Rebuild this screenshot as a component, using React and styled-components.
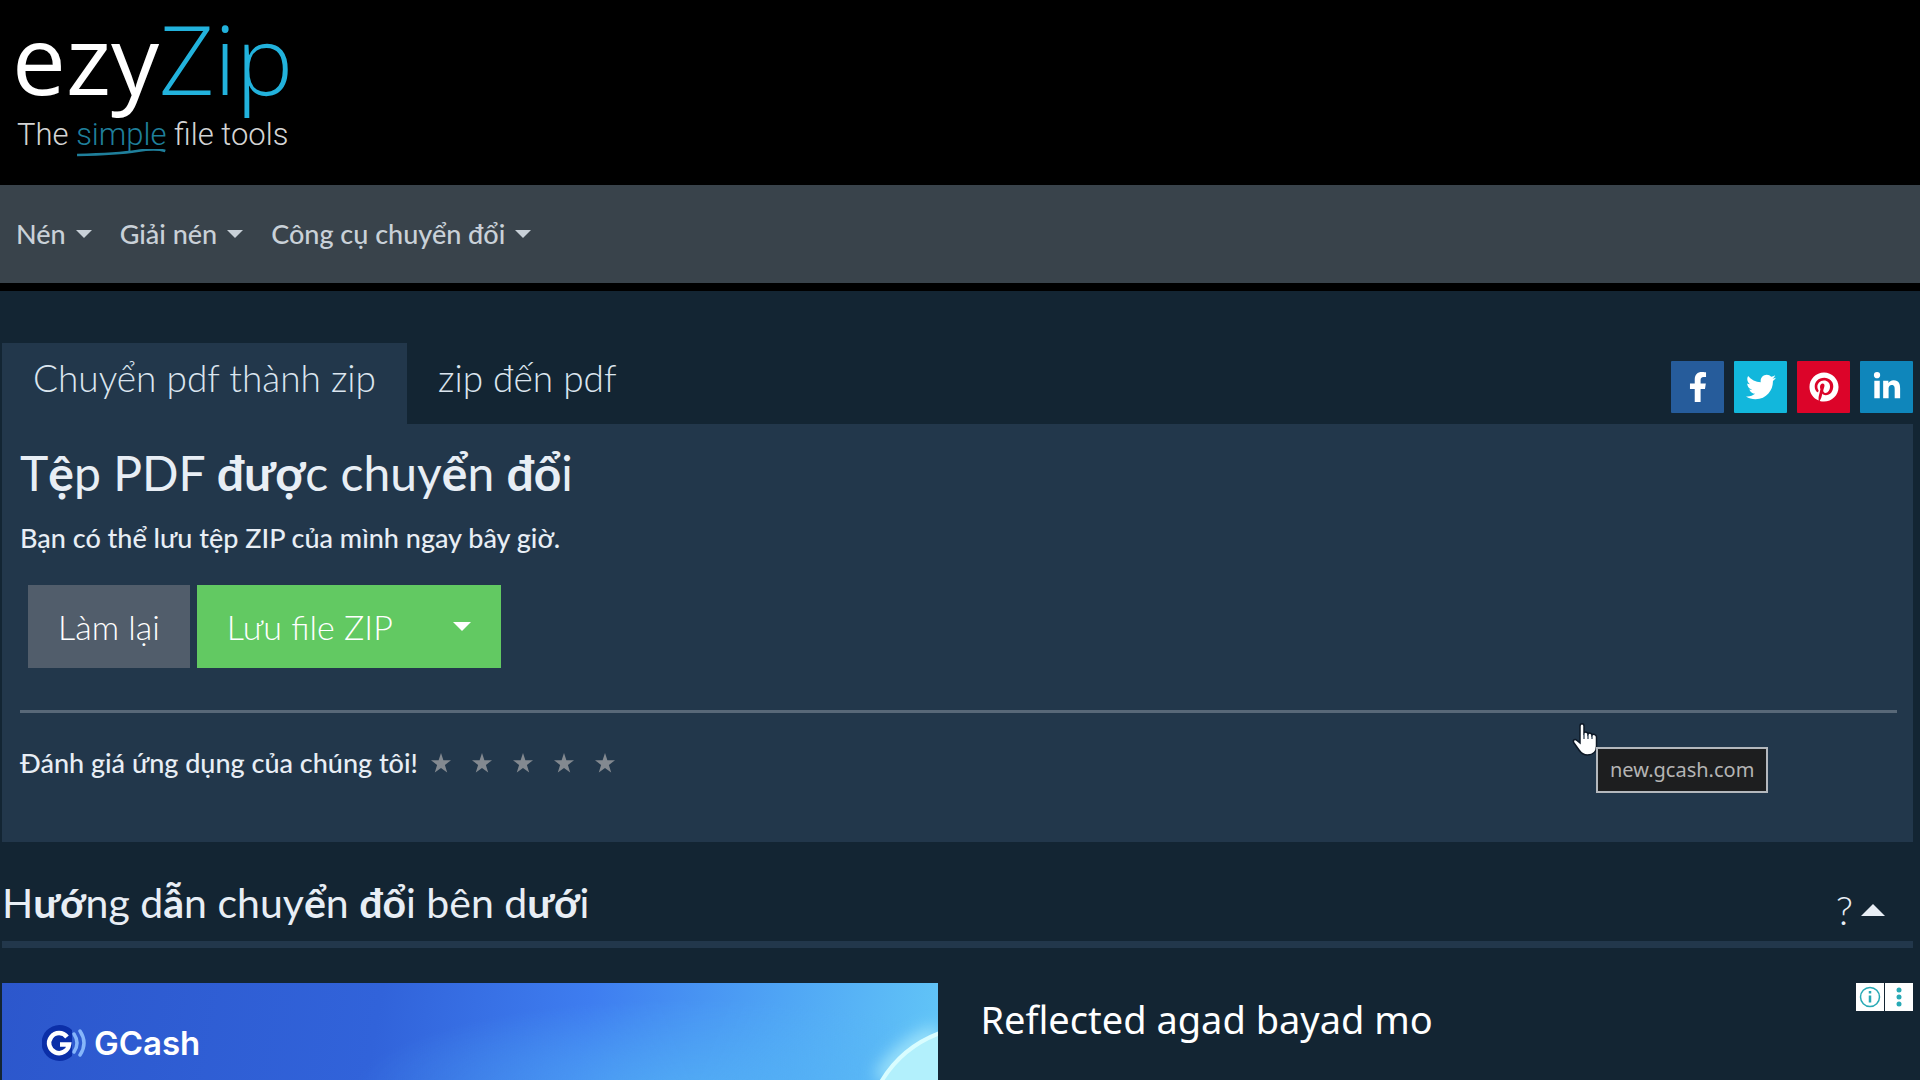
import React, { useState } from "react";
import styled, { createGlobalStyle, css } from "styled-components";
import { FaFacebookF, FaTwitter, FaPinterest, FaLinkedinIn } from "react-icons/fa";

const GlobalStyle = createGlobalStyle`
  *, *::before, *::after {
    box-sizing: border-box;
  }

  body {
    margin: 0;
    background-color: #132533;
    color: #e8eef5;
    font-family: Lato, "Noto Sans", sans-serif;
    font-size: 27px;
    font-weight: 500;
    line-height: 40px;
  }
`;

const Page = styled.div`
  display: flex;
  flex-direction: column;
  min-height: 100vh;
`;

const Header = styled.header`
  display: flex;
  padding: 0 12px 31px;
  background-color: #000;
`;

const LogoLink = styled.a`
  display: flex;
  flex-direction: column;
  color: #fff;
  text-decoration: none;
`;

const LogoName = styled.span`
  font-family: "Open Sans", sans-serif;
  font-size: 96px;
  font-weight: 400;
  line-height: 116px;
`;

const LogoAccent = styled.span`
  color: #22b2dc;
  font-weight: 300;
`;

const Tagline = styled.span`
  padding-left: 5px;
  font-family: Roboto, sans-serif;
  font-size: 31px;
  font-weight: 300;
  line-height: 38px;
  color: #d4d4d4;
`;

const Simple = styled.span`
  position: relative;
  color: #1f7f9b;

  svg {
    position: absolute;
    left: 0;
    bottom: -4px;
    width: 100%;
    height: 8px;
  }
`;

const Nav = styled.nav`
  display: flex;
  align-items: center;
  gap: 28px;
  height: 106px;
  padding: 0 16px;
  background-color: #39434b;
  border-bottom: 8px solid #000;
`;

const NavButton = styled.button`
  display: flex;
  align-items: center;
  gap: 10px;
  padding: 0;
  border: none;
  background: none;
  color: #c9d1d8;
  font: inherit;
  cursor: pointer;
`;

const Caret = styled.span`
  width: 0;
  height: 0;
  border: ${({ $size }) => $size}px solid transparent;
  border-top-color: currentColor;
  border-bottom: 0;

  ${({ $up, $size }) =>
    $up &&
    css`
      border-top: 0;
      border-bottom: ${$size}px solid currentColor;
    `}
`;

const Main = styled.main`
  flex: 1;
  display: flex;
  flex-direction: column;
  padding: 52px 7px 0 2px;
`;

const TabRow = styled.div`
  display: flex;
  justify-content: space-between;
  align-items: flex-end;
`;

const TabList = styled.div`
  display: flex;
`;

const Tab = styled.button`
  height: 81px;
  padding: 0 31px 12px;
  border: none;
  background-color: ${({ $active }) => ($active ? "#22374b" : "transparent")};
  color: #dbe5ef;
  font: inherit;
  font-size: 37px;
  font-weight: 300;
  cursor: pointer;
`;

const ShareList = styled.div`
  display: flex;
  gap: 10px;
  padding-bottom: 11px;
`;

const ShareLink = styled.a`
  display: flex;
  align-items: center;
  justify-content: center;
  width: 53px;
  height: 52px;
  border-radius: 1px;
  background-color: ${({ $color }) => $color};
  color: #fff;
`;

const Panel = styled.section`
  padding: 19px 16px 59px 18px;
  background-color: #22374b;
`;

const Title = styled.h1`
  margin: 0;
  font-size: 48px;
  font-weight: 400;
  line-height: 60px;
`;

const Heavy = styled.span`
  font-weight: 700;
`;

const Message = styled.p`
  margin: 15px 0 27px;
`;

const Actions = styled.div`
  display: flex;
  gap: 7px;
  padding-left: 8px;
`;

const ButtonGroup = styled.div`
  display: flex;
`;

const ActionButton = styled.button`
  display: flex;
  align-items: center;
  height: 83px;
  padding: 0 30px;
  border: none;
  background-color: ${({ $primary }) => ($primary ? "#62c962" : "#515d6b")};
  color: #fff;
  font: inherit;
  font-size: 34px;
  font-weight: 300;
  cursor: pointer;
`;

const Divider = styled.hr`
  margin: 42px 0 30px;
  border: none;
  border-top: 3px solid #586878;
`;

const Rating = styled.div`
  position: relative;
  display: flex;
  align-items: center;
`;

const Stars = styled.div`
  display: flex;
  gap: 21px;
  padding-left: 13px;
`;

const StarButton = styled.button`
  display: flex;
  padding: 0;
  border: none;
  background: none;
  color: #838990;
  cursor: pointer;
`;

const Pointer = styled.div`
  position: absolute;
  right: 297px;
  top: -21px;
  display: flex;
`;

const Tooltip = styled.div`
  position: absolute;
  left: 24px;
  top: 25px;
  padding: 0 12px;
  border: 2px solid #b4b8bd;
  background-color: #1d1e1f;
  color: #b4b4b4;
  font-family: "Noto Sans", sans-serif;
  font-size: 20px;
  font-weight: 400;
  line-height: 42px;
`;

const GuideHeader = styled.div`
  display: flex;
  justify-content: space-between;
  align-items: flex-end;
  padding: 32px 28px 7px 0;
  border-bottom: 7px solid #22374b;
`;

const GuideTitle = styled.h2`
  margin: 0;
  padding-bottom: 2px;
  font-size: 41px;
  font-weight: 400;
  line-height: 58px;
`;

const HelpButton = styled.button`
  display: flex;
  align-items: center;
  gap: 8px;
  padding: 0;
  border: none;
  background: none;
  color: #e8eef5;
  font: inherit;
  font-size: 40px;
  font-weight: 300;
  line-height: 48px;
  cursor: pointer;
`;

const Ad = styled.aside`
  flex: 1;
  display: flex;
  margin-top: 35px;
`;

const Banner = styled.a`
  position: relative;
  display: flex;
  align-items: flex-start;
  width: 49%;
  min-height: 97px;
  overflow: hidden;
  background:
    radial-gradient(ellipse 340px 90px at 74% 110%, rgba(85, 180, 245, 0.7), transparent),
    linear-gradient(100deg, #2c57cc 0%, #3163da 40%, #3e7df0 62%, #4fa5f5 82%, #62c6f7 100%);
  color: #fff;
  text-decoration: none;
`;

const Glow = styled.svg`
  position: absolute;
  right: 0;
  top: 0;
  width: 62px;
  height: 97px;
  overflow: visible;
`;

const Brand = styled.span`
  display: flex;
  align-items: center;
  gap: 6px;
  padding: 40px 0 0 40px;
  font-family: Inter, sans-serif;
  font-size: 33px;
  font-weight: 600;
`;

const AdText = styled.div`
  flex: 1;
  display: flex;
  justify-content: space-between;
  align-items: flex-start;
  padding-left: 42px;
`;

const AdLink = styled.a`
  padding-top: 9px;
  color: #fff;
  font-family: "Noto Sans", sans-serif;
  font-size: 38px;
  font-weight: 400;
  line-height: 54px;
  text-decoration: none;
`;

const AdControls = styled.div`
  display: flex;
  gap: 1px;
`;

const AdControl = styled.button`
  display: flex;
  align-items: center;
  justify-content: center;
  width: 28px;
  height: 28px;
  padding: 0;
  border: none;
  background-color: #fff;
  color: #27a9b5;
`;

const menus = ["Nén", "Giải nén", "Công cụ chuyển đổi"];

const tabs = [
  { id: "pdf-zip", title: "Chuyển pdf thành zip" },
  { id: "zip-pdf", title: "zip đến pdf" },
];

const networks = [
  { name: "Facebook", color: "#265c9b", Icon: FaFacebookF },
  { name: "Twitter", color: "#12b7dc", Icon: FaTwitter },
  { name: "Pinterest", color: "#dc0429", Icon: FaPinterest },
  { name: "LinkedIn", color: "#0f86bb", Icon: FaLinkedinIn },
];

const HeadingText = ({ children }) =>
  children
    .split(/([đưượớẫểổệ]+)/)
    .map((part, i) => (i % 2 ? <Heavy key={i}>{part}</Heavy> : part));

const Star = () => (
  <svg width="20" height="20" viewBox="0 0 20 20" fill="currentColor">
    <path d="M10 0l2.4 7.3H20l-6.1 4.6 2.3 7.6-6.2-4.6-6.2 4.6 2.3-7.6L0 7.3h7.6z" />
  </svg>
);

const Hand = () => (
  <svg width="28" height="36" viewBox="0 0 28 36">
    <path
      d="M8 4c0-3 4-3 4 0v7c1-1.500 4-1 4 1 1-1.500 4-1 4 1 1-1.300 4.500-.8 4.500 2v9c0 6-4 9-9 9-4 0-6.500-2-8.500-5L2 21c-2-3 1-4.500 3-2.500L8 21z"
      fill="#fff"
      stroke="#0d1826"
      strokeWidth="1.500"
    />
    <path d="M12 12v5M16 12v5M20 13v4" stroke="#26384b" strokeWidth="1.200" />
  </svg>
);

const GCashMark = () => (
  <svg width="46" height="40" viewBox="0 0 46 40" fill="none">
    <path d="M30 7a18 18 0 1 0 0 26z" fill="#0b2fa8" />
    <path d="M25 14a10 10 0 1 0 2 7.500H18" stroke="#fff" strokeWidth="4.500" />
    <path d="M32 11q6 9 0 18" stroke="#86b6fa" strokeWidth="3.500" strokeLinecap="round" />
    <path d="M38 8q8 12 0 24" stroke="#86b6fa" strokeWidth="3.500" strokeLinecap="round" />
  </svg>
);

const App = () => {
  const [activeTab, setActiveTab] = useState(tabs[0].id);

  return (
    <Page>
      <GlobalStyle />
      <Header>
        <LogoLink href="#">
          <LogoName>
            ezy<LogoAccent>Zip</LogoAccent>
          </LogoName>
          <Tagline>
            The{" "}
            <Simple>
              simple
              <svg viewBox="0 0 86 8" preserveAspectRatio="none">
                <path d="M1 6Q40 5 58 2T85 2" fill="none" stroke="#1f7f9b" strokeWidth="2.500" />
              </svg>
            </Simple>{" "}
            file tools
          </Tagline>
        </LogoLink>
      </Header>

      <Nav>
        {menus.map((menu) => (
          <NavButton key={menu}>
            {menu}
            <Caret $size={8} />
          </NavButton>
        ))}
      </Nav>

      <Main>
        <TabRow>
          <TabList role="tablist">
            {tabs.map((tab) => (
              <Tab
                key={tab.id}
                role="tab"
                $active={activeTab === tab.id}
                aria-selected={activeTab === tab.id}
                onClick={() => setActiveTab(tab.id)}
              >
                {tab.title}
              </Tab>
            ))}
          </TabList>
          <ShareList>
            {networks.map(({ name, color, Icon }) => (
              <ShareLink key={name} href="#" $color={color} aria-label={name}>
                <Icon size={30} />
              </ShareLink>
            ))}
          </ShareList>
        </TabRow>

        <Panel>
          <Title>
            <HeadingText>Tệp PDF được chuyển đổi</HeadingText>
          </Title>
          <Message>Bạn có thể lưu tệp ZIP của mình ngay bây giờ.</Message>
          <Actions>
            <ActionButton>Làm lại</ActionButton>
            <ButtonGroup>
              <ActionButton $primary>Lưu file ZIP</ActionButton>
              <ActionButton $primary aria-label="ZIP">
                <Caret $size={9} />
              </ActionButton>
            </ButtonGroup>
          </Actions>
          <Divider />
          <Rating>
            <span>Đánh giá ứng dụng của chúng tôi!</span>
            <Stars>
              {[1, 2, 3, 4, 5].map((value) => (
                <StarButton key={value} aria-label={value}>
                  <Star />
                </StarButton>
              ))}
            </Stars>
            <Pointer>
              <Hand />
              <Tooltip role="tooltip">new.gcash.com</Tooltip>
            </Pointer>
          </Rating>
        </Panel>

        <GuideHeader>
          <GuideTitle>
            <HeadingText>Hướng dẫn chuyển đổi bên dưới</HeadingText>
          </GuideTitle>
          <HelpButton>
            ?<Caret $size={12} $up />
          </HelpButton>
        </GuideHeader>

        <Ad>
          <Banner href="#">
            <Brand>
              <GCashMark />
              GCash
            </Brand>
            <Glow viewBox="0 0 62 97">
              <defs>
                <filter id="halo" x="-100%" y="-100%" width="300%" height="300%">
                  <feGaussianBlur stdDeviation="8" />
                </filter>
              </defs>
              <path d="M62 51Q26 64 6 97" fill="none" stroke="#9fe4fb" strokeWidth="18" filter="url(#halo)" />
              <path d="M62 51Q26 64 6 97H62z" fill="#b2f0fc" />
              <path d="M64 50Q26 64 5 99" fill="none" stroke="#d9fdff" strokeWidth="4" />
            </Glow>
          </Banner>
          <AdText>
            <AdLink href="#">Reflected agad bayad mo</AdLink>
            <AdControls>
              <AdControl aria-label="Info">
                <svg width="22" height="22" viewBox="0 0 22 22" fill="none" stroke="currentColor" strokeWidth="1.500">
                  <circle cx="11" cy="11" r="9.500" />
                  <path d="M11 9.500V16.500M11 5v2.500" strokeWidth="2.500" />
                </svg>
              </AdControl>
              <AdControl aria-label="Menu">
                <svg width="6" height="20" viewBox="0 0 6 20" fill="currentColor">
                  <circle cx="3" cy="3" r="2.500" />
                  <circle cx="3" cy="10" r="2.500" />
                  <circle cx="3" cy="17" r="2.500" />
                </svg>
              </AdControl>
            </AdControls>
          </AdText>
        </Ad>
      </Main>
    </Page>
  );
};

export default App;
